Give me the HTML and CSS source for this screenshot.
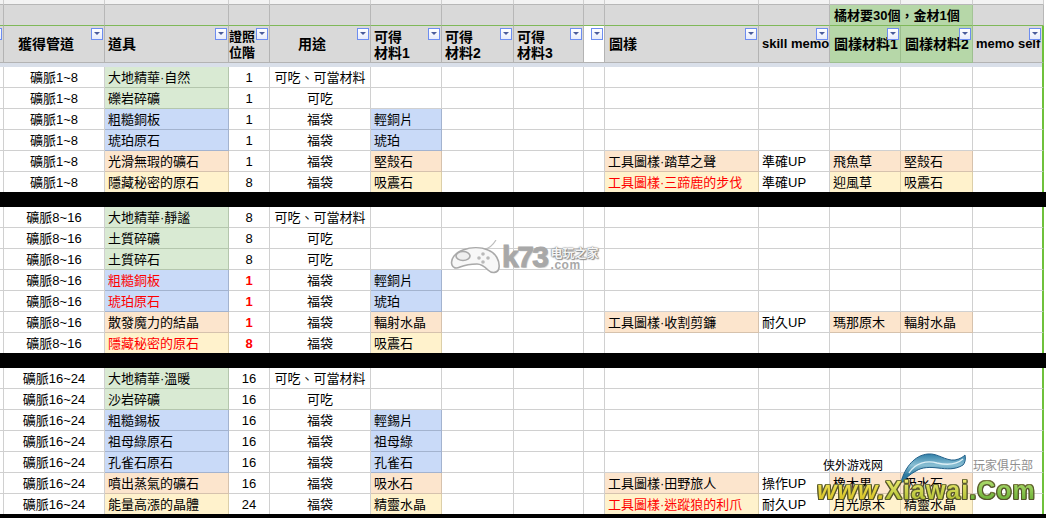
FILE: index.html
```html
<!DOCTYPE html>
<html lang="zh-Hant">
<head>
<meta charset="utf-8">
<title>材料表</title>
<link rel="stylesheet" href="styles.css">
</head>
<body>
<main class="sheet">
<table class="grid">
<colgroup>
<col class="c0"><col class="c1"><col class="c2"><col class="c3"><col class="c4"><col class="c5"><col class="c6"><col class="c7"><col class="c8"><col class="c9"><col class="c10"><col class="c11"><col class="c12"><col class="c13"><col class="c14">
</colgroup>
<thead>
<tr class="r-top"><td></td><td></td><td></td><td></td><td></td><td></td><td></td><td></td><td></td><td></td><td></td><td></td><td></td><td class="edge-plain"></td><td class="end"></td></tr>
<tr class="r-group"><td></td><td></td><td></td><td></td><td></td><td></td><td></td><td></td><td></td><td></td><td></td><td class="hg" colspan="2">橘材要30個，金材1個</td><td class="edge-plain"></td><td class="end"></td></tr>
</thead>
<tbody>
<tr class="r-head">
<th><span class="fb"></span></th>
<th class="ctr shift"><span class="fb"></span>獲得管道</th>
<th><span class="fb"></span>道具</th>
<th class="tight two"><span class="fb"></span>證照<br>位階</th>
<th class="ctr shift"><span class="fb"></span>用途</th>
<th class="two"><span class="fb"></span>可得<br>材料1</th>
<th class="two"><span class="fb"></span>可得<br>材料2</th>
<th class="two"><span class="fb"></span>可得<br>材料3</th>
<th class="blank"><span class="fb"></span></th>
<th class="lead"><span class="fb"></span>圖樣</th>
<th class="latin"><span class="fb"></span>skill memo</th>
<th class="hg"><span class="fb"></span>圖樣材料1</th>
<th class="hg"><span class="fb"></span>圖樣材料2</th>
<th class="latin edge"><span class="fb"></span>memo self</th>
<td class="end"></td>
</tr>
<tr class="r-bar"><td colspan="13"></td><td class="edge"></td><td class="end"></td></tr>

<tr><td></td><td class="ctr">礦脈1~8</td><td class="g">大地精華·自然</td><td class="ctr">1</td><td class="ctr">可吃、可當材料</td><td></td><td></td><td></td><td></td><td></td><td></td><td></td><td></td><td class="edge"></td><td class="end"></td></tr>
<tr><td></td><td class="ctr">礦脈1~8</td><td class="g">礫岩碎礦</td><td class="ctr">1</td><td class="ctr">可吃</td><td></td><td></td><td></td><td></td><td></td><td></td><td></td><td></td><td class="edge"></td><td class="end"></td></tr>
<tr><td></td><td class="ctr">礦脈1~8</td><td class="b">粗糙銅板</td><td class="ctr">1</td><td class="ctr">福袋</td><td class="b">輕銅片</td><td></td><td></td><td></td><td></td><td></td><td></td><td></td><td class="edge"></td><td class="end"></td></tr>
<tr><td></td><td class="ctr">礦脈1~8</td><td class="b">琥珀原石</td><td class="ctr">1</td><td class="ctr">福袋</td><td class="b">琥珀</td><td></td><td></td><td></td><td></td><td></td><td></td><td></td><td class="edge"></td><td class="end"></td></tr>
<tr><td></td><td class="ctr">礦脈1~8</td><td class="o">光滑無瑕的礦石</td><td class="ctr">1</td><td class="ctr">福袋</td><td class="o">堅殼石</td><td></td><td></td><td></td><td class="o">工具圖樣·踏草之聲</td><td>準確UP</td><td class="o">飛魚草</td><td class="o">堅殼石</td><td class="edge"></td><td class="end"></td></tr>
<tr class="last"><td></td><td class="ctr">礦脈1~8</td><td class="y">隱藏秘密的原石</td><td class="ctr">8</td><td class="ctr">福袋</td><td class="y">吸震石</td><td></td><td></td><td></td><td class="y red">工具圖樣·三蹄鹿的步伐</td><td>準確UP</td><td class="y">迎風草</td><td class="y">吸震石</td><td class="edge"></td><td class="end"></td></tr>
<tr class="r-black"><td colspan="15"></td></tr>

<tr><td></td><td class="ctr">礦脈8~16</td><td class="g">大地精華·靜謐</td><td class="ctr">8</td><td class="ctr">可吃、可當材料</td><td></td><td></td><td></td><td></td><td></td><td></td><td></td><td></td><td class="edge"></td><td class="end"></td></tr>
<tr><td></td><td class="ctr">礦脈8~16</td><td class="g">土質碎礦</td><td class="ctr">8</td><td class="ctr">可吃</td><td></td><td></td><td></td><td></td><td></td><td></td><td></td><td></td><td class="edge"></td><td class="end"></td></tr>
<tr><td></td><td class="ctr">礦脈8~16</td><td class="g">土質碎石</td><td class="ctr">8</td><td class="ctr">可吃</td><td></td><td></td><td></td><td></td><td></td><td></td><td></td><td></td><td class="edge"></td><td class="end"></td></tr>
<tr><td></td><td class="ctr">礦脈8~16</td><td class="b red">粗糙銅板</td><td class="ctr redb">1</td><td class="ctr">福袋</td><td class="b">輕銅片</td><td></td><td></td><td></td><td></td><td></td><td></td><td></td><td class="edge"></td><td class="end"></td></tr>
<tr><td></td><td class="ctr">礦脈8~16</td><td class="b red">琥珀原石</td><td class="ctr redb">1</td><td class="ctr">福袋</td><td class="b">琥珀</td><td></td><td></td><td></td><td></td><td></td><td></td><td></td><td class="edge"></td><td class="end"></td></tr>
<tr><td></td><td class="ctr">礦脈8~16</td><td class="o">散發魔力的結晶</td><td class="ctr redb">1</td><td class="ctr">福袋</td><td class="o">輻射水晶</td><td></td><td></td><td></td><td class="o">工具圖樣·收割剪鐮</td><td>耐久UP</td><td class="o">瑪那原木</td><td class="o">輻射水晶</td><td class="edge"></td><td class="end"></td></tr>
<tr class="last"><td></td><td class="ctr">礦脈8~16</td><td class="y red">隱藏秘密的原石</td><td class="ctr redb">8</td><td class="ctr">福袋</td><td class="y">吸震石</td><td></td><td></td><td></td><td></td><td></td><td></td><td></td><td class="edge"></td><td class="end"></td></tr>
<tr class="r-black"><td colspan="15"></td></tr>

<tr><td></td><td class="ctr">礦脈16~24</td><td class="g">大地精華·溫暖</td><td class="ctr">16</td><td class="ctr">可吃、可當材料</td><td></td><td></td><td></td><td></td><td></td><td></td><td></td><td></td><td class="edge"></td><td class="end"></td></tr>
<tr><td></td><td class="ctr">礦脈16~24</td><td class="g">沙岩碎礦</td><td class="ctr">16</td><td class="ctr">可吃</td><td></td><td></td><td></td><td></td><td></td><td></td><td></td><td></td><td class="edge"></td><td class="end"></td></tr>
<tr><td></td><td class="ctr">礦脈16~24</td><td class="b">粗糙錫板</td><td class="ctr">16</td><td class="ctr">福袋</td><td class="b">輕錫片</td><td></td><td></td><td></td><td></td><td></td><td></td><td></td><td class="edge"></td><td class="end"></td></tr>
<tr><td></td><td class="ctr">礦脈16~24</td><td class="b">祖母綠原石</td><td class="ctr">16</td><td class="ctr">福袋</td><td class="b">祖母綠</td><td></td><td></td><td></td><td></td><td></td><td></td><td></td><td class="edge"></td><td class="end"></td></tr>
<tr><td></td><td class="ctr">礦脈16~24</td><td class="b">孔雀石原石</td><td class="ctr">16</td><td class="ctr">福袋</td><td class="b">孔雀石</td><td></td><td></td><td></td><td></td><td></td><td></td><td></td><td class="edge"></td><td class="end"></td></tr>
<tr><td></td><td class="ctr">礦脈16~24</td><td class="o">噴出蒸氣的礦石</td><td class="ctr">16</td><td class="ctr">福袋</td><td class="o">吸水石</td><td></td><td></td><td></td><td class="o">工具圖樣·田野旅人</td><td>操作UP</td><td class="o">橡木果</td><td class="o">吸水石</td><td class="edge"></td><td class="end"></td></tr>
<tr class="last"><td></td><td class="ctr">礦脈16~24</td><td class="y">能量高漲的晶體</td><td class="ctr">24</td><td class="ctr">福袋</td><td class="y">精靈水晶</td><td></td><td></td><td></td><td class="y red">工具圖樣·迷蹤狼的利爪</td><td>耐久UP</td><td class="y">月光原木</td><td class="y">精靈水晶</td><td class="edge"></td><td class="end"></td></tr>
<tr class="r-black tail"><td colspan="15"></td></tr>
</tbody>
</table>

<div class="mark-k73">
<svg class="pad" viewBox="0 0 50 34" width="50" height="34" aria-hidden="true">
<path class="pad-cord" d="M20 9C27 7 31 9 35 9C40 8 43 5 46 0"/>
<path class="pad-body" d="M2 25C0 19 5 13 13 10C21 7 31 7 38 10C46 13 50 21 49 28C48 33 42 34 38 30C35 27 32 24 27 24C21 24 15 25 10 27C6 29 3 28 2 25Z"/>
<ellipse class="pad-ring" cx="13" cy="16" rx="7" ry="4.5"/>
<circle class="pad-dot" cx="33" cy="14" r="1.8"/><circle class="pad-dot" cx="38" cy="18" r="1.8"/><circle class="pad-dot" cx="33" cy="22" r="1.8"/><circle class="pad-dot" cx="29" cy="18" r="1.8"/>
</svg>
<span class="k73-big">k73</span>
<span class="k73-side"><span class="k73-cn">电玩之家</span><span class="k73-com">.com</span></span>
</div>

<div class="mark-xw">
<span class="xw-cn xw-cn-a">侠外游戏网</span>
<span class="xw-cn xw-cn-b">玩家俱乐部</span>
<svg class="xw-wave" viewBox="0 0 66 36" width="66" height="36" aria-hidden="true">
<defs><linearGradient id="wv" x1="0" y1="0" x2="0" y2="1"><stop offset="0" stop-color="#2f7fa8"/><stop offset=".4" stop-color="#8bc0d4"/><stop offset=".75" stop-color="#2b7aa0"/></linearGradient></defs>
<path fill="url(#wv)" stroke="#23618a" d="M1 29C5 14 15 2 28 1C38 0 45 8 55 7C60 6 63 4 65 2C66 6 65 10 63 12C55 17 47 16 38 15C30 14 22 14 16 18C10 21 6 25 3 29Z"/>
<path fill="none" stroke="#dceff5" stroke-width="1.4" d="M9 20C15 10 27 7 37 10C46 12 56 12 63 6"/>
</svg>
<span class="xw-url"><span class="u1">www.</span><span class="u2">Xiawai</span><span class="u3">.Com</span></span>
</div>
</main>
</body>
</html>
```
FILE: styles.css
```css
* { box-sizing: border-box; }
html, body { margin: 0; padding: 0; background: #fff; }
body { width: 1046px; height: 518px; overflow: hidden; }
.sheet { position: relative; width: 1046px; height: 518px; overflow: hidden; }

.grid {
  table-layout: fixed;
  border-collapse: separate;
  border-spacing: 0;
  width: 1046px;
  font-family: "Liberation Sans", "Noto Sans CJK TC", sans-serif;
  font-size: 13px;
  line-height: 18px;
  color: #000;
}
.c0 { width: 4px; } .c1 { width: 101px; } .c2 { width: 124px; } .c3 { width: 41px; }
.c4 { width: 101px; } .c5 { width: 71px; } .c6 { width: 72px; } .c7 { width: 70px; }
.c8 { width: 21px; } .c9 { width: 154px; } .c10 { width: 71px; } .c11 { width: 71px; }
.c12 { width: 72px; } .c13 { width: 71px; } .c14 { width: 2px; }

.grid td, .grid th {
  height: 21px;
  padding: 2px 3px 0;
  border-right: 1px solid #d0d0d0;
  border-bottom: 1px solid #d0d0d0;
  white-space: nowrap;
  overflow: hidden;
  text-align: left;
  font-weight: normal;
  vertical-align: middle;
}
.grid td:first-child, .grid th:first-child { padding: 0; }
.grid .ctr { text-align: center; padding: 2px 0 0; }
.grid .end { border: 0; padding: 0; background: #fff; }
.grid .edge { border-right: 2px solid #6fc13c; }

.grid .r-top td { height: 5px; padding: 0; background: #f3f3f3; border-color: #cfcfcf; border-bottom-color: #b7b7b7; }
.grid .r-top .end { background: #fff; border: 0; }

.grid .r-group td { height: 21px; padding: 1px 3px 0; background: #d9d9d9; border-color: #b7b7b7; border-bottom-color: #7fb859; }
.grid .r-group td:first-child { padding: 0; }
.grid .r-group .hg { padding-left: 4px; background: #b6d7a8; font-weight: bold; border-color: #a3c495; border-bottom-color: #7fb859; }
.grid .r-group .end { background: #fff; border: 0; padding: 0; }

.grid .r-head th {
  position: relative;
  height: 37px;
  padding: 0 3px;
  background: #d9d9d9;
  border-color: #b3b3b3;
  font-weight: bold;
  font-size: 14px;
  line-height: 16px;
  overflow: visible;
}
.grid .r-head .two { padding-top: 2px; }
.grid .r-head .shift { padding: 0 16px 0 0; }
.grid .r-head .blank { background: #fff; }
.grid .r-head .tight { padding: 2px 0 0; font-size: 13px; text-align: left; }
.grid .r-head .lead { padding-left: 4px; }
.grid .r-head .latin { font-size: 13px; }
.grid .r-head .hg { background: #b6d7a8; border-color: #9dbf8f; padding-left: 4px; }
.grid .r-head .edge { border-right-color: #6fc13c; }
.grid .r-head th:first-child { padding: 0; overflow: hidden; }

.fb {
  position: absolute;
  top: 2px;
  right: 1px;
  width: 12px;
  height: 12px;
  border: 1px solid #6d8df0;
  background: linear-gradient(#fff, #e8ecfb);
}
.fb::after {
  content: "";
  position: absolute;
  left: 2px;
  top: 3px;
  width: 0;
  height: 0;
  border-left: 3px solid transparent;
  border-right: 3px solid transparent;
  border-top: 3px solid #4a5c9c;
}

.grid .r-bar td { height: 4px; padding: 0; background: #d9dfe9; border: 0; }
.grid .r-bar .edge { border-right: 2px solid #6fc13c; }
.grid .r-bar .end { background: #fff; }

.grid .last td { height: 20px; border-bottom: 0; }
.grid .last .end { border: 0; }
.grid .r-black td { height: 15px; padding: 0; background: #000; border: 0; }
.grid .r-black.tail td { height: 4px; }

.grid .g { background: #d9ead3; border-color: #b4c6ad; }
.grid .b { background: #c9daf8; border-color: #a3b3cf; }
.grid .o { background: #fce5cd; border-color: #d6c2ad; }
.grid .y { background: #fff2cc; border-color: #dccfa9; }
.grid .red { color: #f00; }
.grid .redb { color: #f00; font-weight: bold; }

/* watermarks lying over the sheet */
.mark-k73 {
  position: absolute;
  left: 450px;
  top: 240px;
  width: 152px;
  height: 34px;
  display: flex;
  align-items: flex-start;
  font-family: "Liberation Sans", "Noto Sans CJK SC", sans-serif;
  pointer-events: none;
}
.pad { flex: none; }
.pad-cord { fill: none; stroke: #bdbdbd; stroke-width: 1.2; }
.pad-body { fill: #f7f7f7; stroke: #a9a9a9; stroke-width: 1.6; }
.pad-ring { fill: #efefef; stroke: #a9a9a9; stroke-width: 1.6; }
.pad-dot { fill: #b9b9b9; }
.k73-big {
  margin: 0 0 0 2px;
  font-size: 30px;
  line-height: 34px;
  font-weight: bold;
  letter-spacing: -1.5px;
  color: #a8a8a8;
  -webkit-text-stroke: 1px #a8a8a8;
  text-shadow: 1px 1px 1px #d0d0d0;
}
.k73-side { display: flex; flex-direction: column; margin: 8px 0 0 3px; }
.k73-cn { font-size: 12px; line-height: 12px; font-weight: bold; color: #f4f4f4; text-shadow: 0 0 2px #777, 0 0 1px #777, 1px 1px 1px #999; white-space: nowrap; }
.k73-com { font-size: 12px; line-height: 10px; font-weight: bold; color: #a8a8a8; letter-spacing: .5px; }

.mark-xw {
  position: absolute;
  left: 816px;
  top: 452px;
  width: 226px;
  height: 54px;
  font-family: "Liberation Sans", "Noto Sans CJK SC", sans-serif;
  pointer-events: none;
}
.xw-cn { position: absolute; top: 6px; font-size: 12px; line-height: 16px; white-space: nowrap; }
.xw-cn-a { left: 7px; color: #000; }
.xw-cn-b { left: 157px; color: #8f8f8f; }
.xw-wave { position: absolute; left: 84px; top: 1px; }
.xw-url {
  position: absolute;
  left: 1px;
  top: 24px;
  font-size: 25px;
  line-height: 28px;
  font-weight: bold;
  letter-spacing: 1px;
  white-space: nowrap;
  filter: drop-shadow(1px 0 0 #55552c) drop-shadow(-1px 0 0 #55552c) drop-shadow(0 1px 0 #55552c) drop-shadow(0 -1px 0 #77773f);
}
.u1, .u2, .u3 { -webkit-background-clip: text; background-clip: text; color: transparent; }
.u1 { font-style: italic; background-image: linear-gradient(#fbf06a, #cdb818); }
.u2 { background-image: linear-gradient(#f6f278, #a6b828); }
.u3 { background-image: linear-gradient(#bde678, #5fa82c); }
```
